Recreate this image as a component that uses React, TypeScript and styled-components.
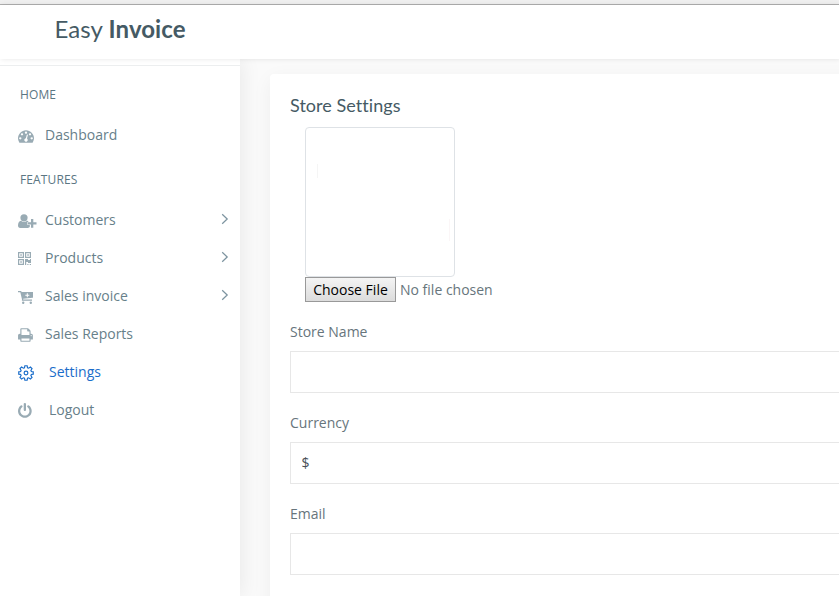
import React from 'react';
import styled, { createGlobalStyle, css } from 'styled-components';

const GlobalStyle = createGlobalStyle`
  * { box-sizing: border-box; }
  body { margin: 0; overflow: hidden; background: #fafafa; color: #67757c; font: 400 14px/20px "Open Sans", sans-serif; }
`;

const Page = styled.div`
  height: 596px;
  display: flex;
  flex-direction: column;
  overflow: hidden;
`;
const BrowserEdge = styled.div`
  height: 5px;
  flex: none;
  background: #f0f0f0;
  border-bottom: 1px solid #b0b0b0;
`;
const Header = styled.header`
  height: 54px;
  flex: none;
  position: relative;
  z-index: 2;
  padding: 8px 0 0 54.5px;
  background: #fff;
  box-shadow: 1px 0 5px rgba(0, 0, 0, 0.1);
`;
const Brand = styled.div`
  font: 400 24px/32px Lato, sans-serif;
  letter-spacing: 0.06px;
  color: #455a64;
  white-space: nowrap;
  b { font-weight: 700; }
`;
const Body = styled.div`
  flex: 1;
  min-height: 0;
  display: flex;
`;
const Sidebar = styled.aside`
  width: 240px;
  flex: none;
  padding-top: 6px;
  background: #fff;
  box-shadow: 1px 0 20px rgba(0, 0, 0, 0.08);
`;
const Nav = styled.nav`
  border-top: 1px solid #eceeef;
  padding-top: 14px;
`;
const Heading = styled.div`
  height: 30px;
  padding-left: 20px;
  font-size: 12px;
  line-height: 30px;
  font-weight: 500;
  letter-spacing: 0.12px;
  color: #5b7683;
`;
const Item = styled.a<{ $active?: boolean; $wide?: boolean }>`
  height: 38px;
  display: flex;
  align-items: center;
  padding: 0 11px 0 18px;
  color: ${p => (p.$active ? '#1a6dca' : '#67808a')};
  span { flex: 1; padding-bottom: 2px; margin-left: ${p => (p.$wide ? 12 : 8)}px; }
`;
const Group = styled.div`
  padding: 7px 0 10px;
`;
const IconBox = styled.i<{ $active?: boolean }>`
  width: 19px;
  height: 18px;
  flex: none;
  display: flex;
  align-items: center;
  color: ${p => (p.$active ? '#1a6dca' : '#99abb4')};
  svg { flex: none; display: block; overflow: visible; }
`;
const Chevron = styled.svg`
  width: 8px;
  height: 12px;
  margin-bottom: 4px;
  fill: none;
  stroke: #7d94a0;
  stroke-width: 1.25;
`;
const Main = styled.main`
  flex: 1;
  padding: 15px 0 0 30px;
  min-width: 0;
`;
const Card = styled.section`
  width: 620px;
  height: 570px;
  padding: 19px 20px;
  background: #fff;
  border-radius: 4px;
  box-shadow: 0 5px 20px rgba(0, 0, 0, 0.05);
`;
const Title = styled.h4`
  margin: 0 0 10px;
  font: 400 18px/24px Lato, sans-serif;
  font-variant-ligatures: none;
  letter-spacing: 0.05px;
  color: #455a64;
`;
const Upload = styled.div`
  margin: 0 0 20px 15px;
`;
const Preview = styled.div`
  width: 150px;
  height: 150px;
  display: flex;
  justify-content: space-between;
  padding: 36px 4px 0 11px;
  border: 1px solid #dee2e6;
  border-radius: 4px;
`;
const Trace = styled.i<{ $right?: boolean }>`
  width: 1px;
  height: 14px;
  background: #f5f5f5;
  ${p => p.$right && css`height: 22px; margin-top: 55px; background: #fbf6f7;`}
`;
const FileRow = styled.div`
  display: flex;
  align-items: center;
  gap: 4px;
  height: 25px;
`;
const FileButton = styled.button`
  width: 91px;
  height: 25px;
  padding: 0;
  border: 1px solid #999;
  border-radius: 0;
  background: linear-gradient(#f4f4f4, #dcdcdc);
  font: 400 14px/19px "Open Sans", sans-serif;
  color: #000;
  white-space: nowrap;
`;
const Field = styled.div`
  margin-bottom: 20px;
  label { display: block; height: 20px; margin-bottom: 9px; }
`;
const Input = styled.input`
  display: block;
  width: 580px;
  height: 42px;
  padding: 0 10.5px 1px;
  border: 1px solid #e7e7e7;
  border-radius: 0;
  background: #fff;
  font: 400 14px/20px "Open Sans", sans-serif;
  color: #495057;
  outline: none;
`;

const Gauge = () => (
  <svg width="16" height="16" viewBox="0 0 1792 1792" fill="currentColor"><path d="M384 1152q0-53-37.5-90.5t-90.5-37.5-90.5 37.5-37.5 90.5 37.5 90.5 90.5 37.5 90.5-37.5 37.5-90.5zm192-448q0-53-37.5-90.5t-90.5-37.5-90.5 37.5-37.5 90.5 37.5 90.5 90.5 37.5 90.5-37.5 37.5-90.5zm428 481l101-382q6-26-7.5-48.5t-38.5-29.5-48 6.5-30 39.5l-101 382q-60 5-107 43.5t-63 98.500q-20 77 20 146t117 89 146-20 89-117q16-60-6-117t-72-91zm660-33q0-53-37.5-90.5t-90.5-37.5-90.5 37.5-37.5 90.5 37.5 90.5 90.5 37.5 90.5-37.5 37.5-90.5zm-640-640q0-53-37.5-90.5t-90.5-37.5-90.5 37.5-37.5 90.5 37.5 90.5 90.5 37.5 90.5-37.5 37.5-90.5zm448 192q0-53-37.5-90.5t-90.5-37.5-90.5 37.5-37.5 90.5 37.5 90.5 90.5 37.5 90.5-37.5 37.5-90.5zm320 448q0 261-141 483-19 29-54 29h-1402q-35 0-54-29-141-221-141-483 0-182 71-348t191-286 286-191 348-71 348 71 286 191 191 286 71 348z" /></svg>
);
const UserPlus = () => (
  <svg width="19" height="14" viewBox="0 0 19 14" fill="currentColor"><circle cx="6" cy="3.8" r="3.6" /><path d="M3 6.8C1 7 0 8.8 0 11.6 0 13 .8 13.9 2.2 13.9h7.6c1 0 1.7-.4 2-1.1V11H9.4V8.1h1.2C10.100 7.200 9.700 6.900 9 6.800 7.300 8.400 4.700 8.400 3 6.800Z" /><path d="M13 5h2.300v3.200h3.200v2.300h-3.200v3.200H13v-3.200H9.900V8.200H13Z" /></svg>
);
const QrCode = () => (
  <svg width="13" height="15" viewBox="0 0 13 15" fill="currentColor"><path fillRule="evenodd" d="M0 0h6v6H0ZM1.200 1.200v3.600h3.600V1.200ZM7 0h6v6H7ZM8.200 1.200v3.600h3.600V1.200ZM0 7h6v6H0ZM1.200 8.200v3.600h3.600V8.200Z" /><path d="M2.300 2.300h1.500v1.500H2.300ZM9.300 2.300h1.500v1.500H9.300ZM2.300 9.300h1.500v1.500H2.300ZM7 7h3v1h2V7h1v4h-3v-1H8.200v3H7ZM9.300 12h1.200v1H9.300ZM11.700 12H13v1h-1.300Z" /></svg>
);
const CartPlus = () => (
  <svg width="15" height="13" viewBox="0 0 15 13" fill="currentColor"><path fillRule="evenodd" d="M0 0h2.900q.6 0 .7 1.100H15v5.100q0 .5-.5.600l-9.300 1v.8H14v1.200H4Q3.600 9.500 4 8.600L2.300 1.200H0ZM8.800 2.300v1.500H7.300v1h1.500v1.500h1V4.800h1.500v-1H9.800V2.300Z" /><circle cx="5.200" cy="11.700" r="1.200" /><circle cx="12.800" cy="11.700" r="1.200" /></svg>
);
const Printer = () => (
  <svg width="16" height="16" viewBox="60 0 1792 1792" fill="currentColor"><path d="M448 1536h896v-256h-896v256zm0-640h896v-384h-160q-40 0-68-28t-28-68v-160h-640v640zm1152 64q0-26-19-45t-45-19-45 19-19 45 19 45 45 19 45-19 19-45zm128 0v416q0 13-9.500 22.500t-22.500 9.500h-224v160q0 40-28 68t-68 28h-960q-40 0-68-28t-28-68v-160h-224q-13 0-22.500-9.500t-9.500-22.500v-416q0-79 56.500-135.500t135.500-56.500h64v-544q0-40 28-68t68-28h672q40 0 88 20t76 48l152 152q28 28 48 76t20 88v256h64q79 0 135.500 56.500t56.500 135.500z" /></svg>
);
const Gear = () => (
  <svg width="16" height="16" viewBox="0 0 17 17" fill="none" stroke="currentColor" strokeWidth="1.250">
    <path d="M7.300.8h2.400l.4 2.100 1.200.5 1.900-1.200 1.700 1.700-1.200 1.900.5 1.200 2 .3v2.400l-2 .3-.5 1.200 1.200 1.900-1.700 1.700-1.900-1.200-1.200.5-.4 2.100H7.300l-.4-2.100-1.200-.5-1.900 1.200-1.700-1.700 1.200-1.900-.5-1.200-2-.3V7.300l2-.3.5-1.200-1.200-1.900 1.700-1.700 1.900 1.200 1.200-.5Z" />
    <circle cx="8.500" cy="8.500" r="2" />
  </svg>
);
const Power = () => (
  <svg width="16" height="16" viewBox="128 0 1792 1792" fill="currentColor"><path d="M1664 896q0 156-61 298t-164 245-245 164-298 61-298-61-245-164-164-245-61-298q0-182 80.500-343t226.500-270q43-32 95.500-25t83.500 50q32 42 24.500 94.500t-49.500 84.500q-98 74-151.500 181t-53.500 228q0 104 40.500 198.500t109.500 163.500 163.500 109.500 198.500 40.500 198.500-40.500 163.500-109.500 109.500-163.500 40.500-198.500q0-121-53.500-228t-151.500-181q-42-32-49.500-84.500t24.500-94.500q31-43 84-50t95 25q146 109 226.500 270t80.500 343zm-640-768v640q0 52-38 90t-90 38-90-38-38-90v-640q0-52 38-90t90-38 90 38 38 90z" /></svg>
);

type EntryProps = { label: string; icon: React.ReactNode; more?: boolean; active?: boolean; wide?: boolean };
const Entry = ({ label, icon, more, active, wide }: EntryProps) => (
  <Item $active={active} $wide={wide}>
    <IconBox $active={active}>{icon}</IconBox>
    <span>{label}</span>
    {more && <Chevron viewBox="0 0 8 12"><path d="M1.200 1.200 6.200 6 1.200 10.800" /></Chevron>}
  </Item>
);

export default function App() {
  return (
    <Page>
      <GlobalStyle />
      <BrowserEdge />
      <Header><Brand>Easy <b>Invoice</b></Brand></Header>
      <Body>
        <Sidebar>
          <Nav>
            <Heading>HOME</Heading>
            <Group><Entry label="Dashboard" icon={<Gauge />} /></Group>
            <Heading>FEATURES</Heading>
            <Group>
              <Entry label="Customers" icon={<UserPlus />} more />
              <Entry label="Products" icon={<QrCode />} more />
              <Entry label="Sales invoice" icon={<CartPlus />} more />
              <Entry label="Sales Reports" icon={<Printer />} />
              <Entry label="Settings" icon={<Gear />} active wide />
              <Entry label="Logout" icon={<Power />} wide />
            </Group>
          </Nav>
        </Sidebar>
        <Main>
          <Card>
            <Title>Store Settings</Title>
            <Upload>
              <Preview><Trace /><Trace $right /></Preview>
              <FileRow><FileButton>Choose File</FileButton><span>No file chosen</span></FileRow>
            </Upload>
            <Field><label>Store Name</label><Input /></Field>
            <Field><label>Currency</label><Input defaultValue="$" /></Field>
            <Field><label>Email</label><Input /></Field>
          </Card>
        </Main>
      </Body>
    </Page>
  );
}
